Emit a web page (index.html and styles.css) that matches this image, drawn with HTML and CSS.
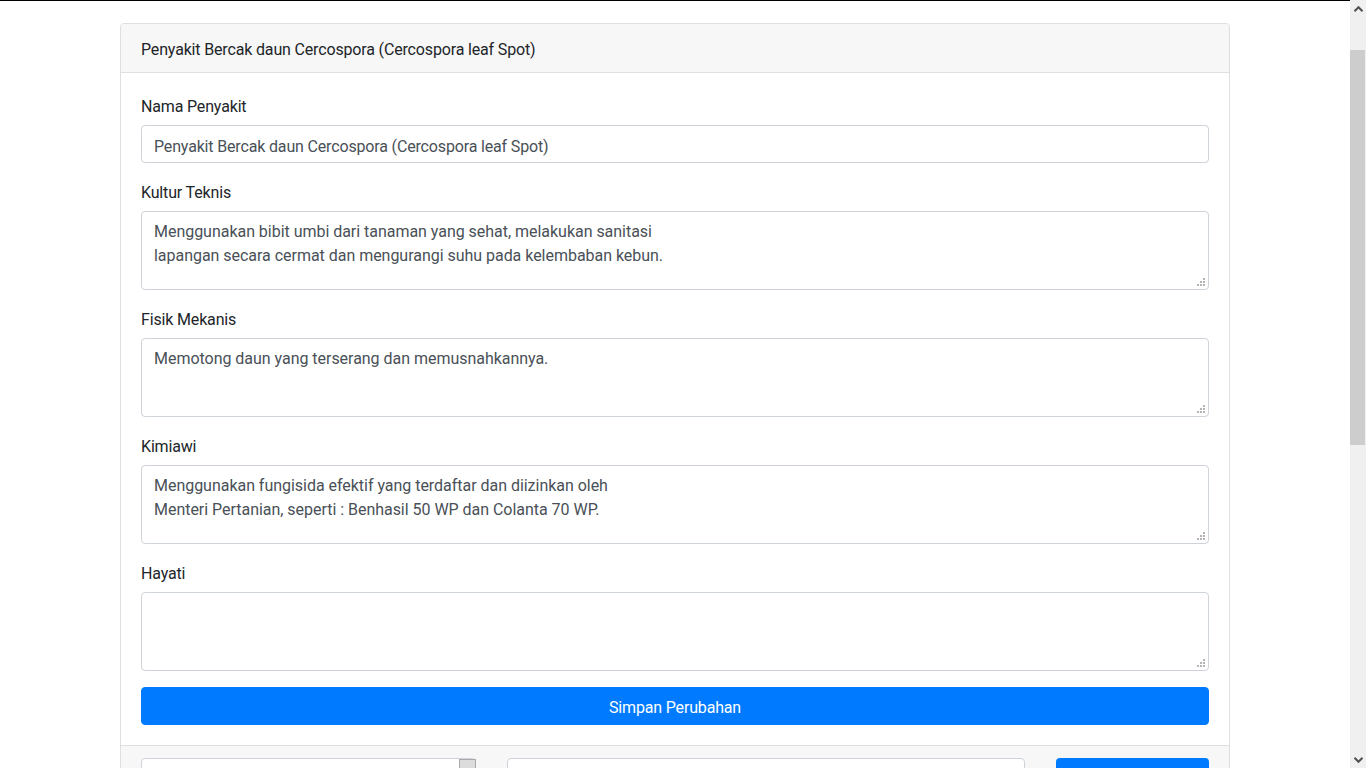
FILE: index.html
```html
<!DOCTYPE html>
<html lang="id">
<head>
<meta charset="utf-8">
<title>Edit Penyakit</title>
<link rel="stylesheet" href="styles.css">
</head>
<body>
<div class="screen">
  <div class="viewport">
    <div class="container">
      <div class="card">
        <div class="card-header">Penyakit Bercak daun Cercospora (Cercospora leaf Spot)</div>
        <div class="card-body">
          <div class="form-group">
            <label class="label">Nama Penyakit</label>
            <input class="form-control" type="text" value="Penyakit Bercak daun Cercospora (Cercospora leaf Spot)">
          </div>
          <div class="form-group">
            <label class="label">Kultur Teknis</label>
            <textarea class="form-control area">Menggunakan bibit umbi dari tanaman yang sehat, melakukan sanitasi
lapangan secara cermat dan mengurangi suhu pada kelembaban kebun.</textarea>
          </div>
          <div class="form-group">
            <label class="label">Fisik Mekanis</label>
            <textarea class="form-control area">Memotong daun yang terserang dan memusnahkannya.</textarea>
          </div>
          <div class="form-group">
            <label class="label">Kimiawi</label>
            <textarea class="form-control area">Menggunakan fungisida efektif yang terdaftar dan diizinkan oleh
Menteri Pertanian, seperti : Benhasil 50 WP dan Colanta 70 WP.</textarea>
          </div>
          <div class="form-group">
            <label class="label">Hayati</label>
            <textarea class="form-control area"></textarea>
          </div>
          <button class="btn btn-primary btn-block" type="button">Simpan Perubahan</button>
        </div>
        <div class="card-footer">
          <div class="footer-row">
            <div class="select-box"><span class="select-btn"></span></div>
            <div class="text-box"></div>
            <div class="footer-btn"></div>
          </div>
        </div>
      </div>
    </div>
  </div>
  <div class="scrollbar">
    <div class="sb-arrow sb-up">
      <svg width="9" height="6" viewBox="0 0 9 6"><path d="M0.5 5.2 L4.5 1.2 L8.5 5.2" fill="none" stroke="#505050" stroke-width="2"/></svg>
    </div>
    <div class="sb-track"><div class="sb-thumb"></div></div>
    <div class="sb-arrow sb-down">
      <svg width="9" height="6" viewBox="0 0 9 6"><path d="M0.5 0.8 L4.5 4.8 L8.5 0.8" fill="none" stroke="#505050" stroke-width="2"/></svg>
    </div>
  </div>
</div>
</body>
</html>
```

FILE: styles.css
```css
* { box-sizing: border-box; }
html, body { margin: 0; padding: 0; height: 100%; overflow: hidden; }
body {
  font-family: Roboto, "Liberation Sans", sans-serif;
  font-size: 16px;
  line-height: 1.5;
  letter-spacing: -0.16px;
  color: #212529;
  background: #fff;
}
.screen { display: flex; height: 768px; }
.viewport {
  flex: 1;
  border-top: 1px solid #000;
  overflow: hidden;
}
.container {
  width: 1110px;
  margin: 22px auto 0;
}
.card {
  border: 1px solid #dfdfdf;
  border-radius: 4px;
  background: #fff;
}
.card-header {
  background: #f7f7f7;
  border-bottom: 1px solid #dfdfdf;
  padding: 14px 20px 10px;
  border-radius: 3px 3px 0 0;
}
.card-body { padding: 20px; }
.form-group { margin-bottom: 16px; }
.label { display: block; padding-top: 2px; margin-bottom: 6px; }
.form-control {
  display: block;
  width: 100%;
  height: 38px;
  padding: 8px 12px 4px;
  font-family: inherit;
  font-size: 16px;
  line-height: 1.5;
  letter-spacing: -0.16px;
  color: #495057;
  background: #fff;
  border: 1px solid #ced4da;
  border-radius: 4px;
  margin: 0;
}
.area {
  height: 79px;
  resize: none;
  letter-spacing: -0.03px;
  background: #fff url("data:image/svg+xml,%3Csvg xmlns='http://www.w3.org/2000/svg' width='8' height='8'%3E%3Cg fill='%23b4b4b4'%3E%3Crect x='6' y='0' width='2' height='2'/%3E%3Crect x='3' y='3' width='2' height='2'/%3E%3Crect x='6' y='3' width='2' height='2'/%3E%3Crect x='0' y='6' width='2' height='2'/%3E%3Crect x='3' y='6' width='2' height='2'/%3E%3Crect x='6' y='6' width='2' height='2'/%3E%3C/g%3E%3C/svg%3E") no-repeat right 3px bottom 3px;
}
.btn {
  display: block;
  width: 100%;
  height: 38px;
  padding: 8px 12px 4px;
  font-family: inherit;
  font-size: 16px;
  line-height: 1.5;
  letter-spacing: -0.16px;
  color: #fff;
  background: #007bff;
  border: 1px solid #007bff;
  border-radius: 4px;
  text-align: center;
}
.card-footer {
  background: #f7f7f7;
  border-top: 1px solid #dfdfdf;
  padding: 12px 20px;
  height: 60px;
}
.footer-row { display: flex; gap: 31px; }
.select-box {
  width: 335px;
  height: 38px;
  background: #fff;
  border: 1px solid #ced4da;
  border-radius: 4px;
  display: flex;
  justify-content: flex-end;
  align-items: flex-start;
}
.select-btn {
  width: 17px;
  height: 30px;
  background: #dcdcdc;
  border: 1px solid #a9a9a9;
  margin-right: -1px;
}
.text-box {
  width: 518px;
  height: 38px;
  background: #fff;
  border: 1px solid #ced4da;
  border-radius: 4px;
}
.footer-btn {
  width: 153px;
  height: 38px;
  background: #007bff;
  border-radius: 4px;
}
.scrollbar {
  width: 16px;
  background: #f0f0f0;
  display: flex;
  flex-direction: column;
}
.sb-arrow {
  height: 17px;
  display: flex;
  align-items: center;
  justify-content: center;
}
.sb-track { flex: 1; }
.sb-thumb {
  margin-top: 33px;
  height: 395px;
  background: #cdcdcd;
  width: 15px;
}
```
